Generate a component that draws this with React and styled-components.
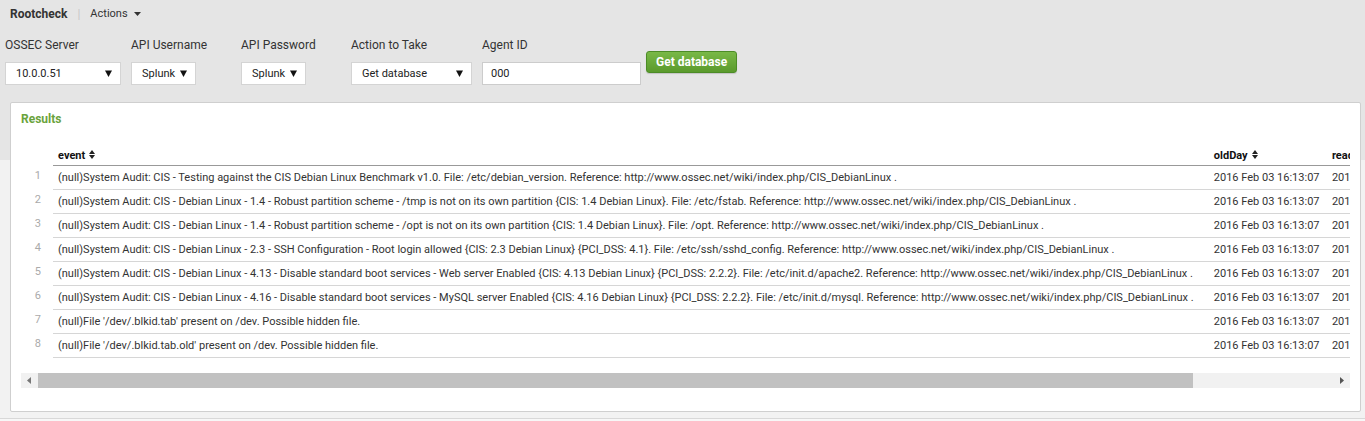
import React from "react";
import styled, { createGlobalStyle } from "styled-components";

const GlobalStyle = createGlobalStyle`
  html, body {
    margin: 0;
    padding: 0;
  }
  body {
    font-family: Roboto, "Liberation Sans", Arial, sans-serif;
    font-size: 12px;
    color: #333;
    background: linear-gradient(#e5e5e5 0, #e5e5e5 160px, #f2f2f2 160px);
    overflow: hidden;
  }
`;

const Page = styled.div`
  width: 1365px;
  display: flex;
  flex-direction: column;
`;

const TopBar = styled.div`
  display: flex;
  align-items: center;
  height: 27px;
  padding: 0 10px;
`;

const AppTitle = styled.span`
  font-weight: 700;
  font-size: 12px;
  color: #333;
`;

const Divider = styled.span`
  color: #c8c8c8;
  margin: 0 10px 0 10px;
`;

const MenuLink = styled.span`
  display: inline-flex;
  align-items: center;
  gap: 6px;
  font-size: 11px;
  color: #333;
`;

const Fieldset = styled.div`
  display: flex;
  align-items: flex-start;
  padding: 10px 5px 0;
  height: 59px;
`;

const Field = styled.div`
  display: flex;
  flex-direction: column;
  min-width: 100px;
  margin-right: 10px;
`;

const Label = styled.label`
  font-size: 12px;
  line-height: 16px;
  color: #333;
  margin-bottom: 9px;
`;

const SelectBox = styled.div`
  box-sizing: border-box;
  width: ${({ $width }) => $width}px;
  height: 23px;
  background: #fff;
  border: 1px solid #d4d4d4;
  display: flex;
  align-items: center;
  justify-content: space-between;
  padding: 0 8px 0 10px;
  font-size: 11px;
  color: #222;
`;

const TextInput = styled.div`
  box-sizing: border-box;
  width: 159px;
  height: 23px;
  background: #fff;
  border: 1px solid #ccc;
  display: flex;
  align-items: center;
  padding: 0 8px;
  font-size: 11px;
  color: #222;
`;

const SubmitButton = styled.button`
  margin: 14px 0 0 -5px;
  height: 22px;
  padding: 0 9px;
  border: 1px solid #4c8c26;
  border-radius: 3px;
  background: linear-gradient(#79b847, #5a9a2c);
  color: #fff;
  font-family: Roboto, "Liberation Sans", Arial, sans-serif;
  font-size: 12px;
  font-weight: 700;
  box-shadow: 0 1px 1px rgba(0, 0, 0, 0.15);
`;

const Panel = styled.div`
  box-sizing: border-box;
  margin: 6px 4px 0 10px;
  height: 310px;
  background: #fff;
  border: 1px solid #cfcfcf;
  border-radius: 2px;
  padding: 8px 10px 0;
  display: flex;
  flex-direction: column;
`;

const PanelTitle = styled.div`
  font-size: 12px;
  font-weight: 700;
  color: #6aa33c;
  line-height: 16px;
  margin-bottom: 18px;
`;

const TableClip = styled.div`
  width: 1329px;
  overflow: hidden;
`;

const Table = styled.table`
  table-layout: fixed;
  border-collapse: collapse;
  width: 1406px;
`;

const Th = styled.th`
  text-align: left;
  font-weight: 700;
  font-size: 11px;
  color: #111;
  height: 20px;
  padding: 0 5px;
  white-space: nowrap;
  overflow: hidden;
  border-bottom: ${({ $blank }) => ($blank ? "none" : "1px solid #999")};
`;

const Td = styled.td`
  font-size: 11px;
  color: #333;
  height: 23px;
  padding: 0 5px;
  white-space: nowrap;
  overflow: hidden;
  border-bottom: 1px solid #d6d6d6;
`;

const RowNum = styled.td`
  text-align: right;
  font-size: 11px;
  color: #aaa;
  padding: 0 12px 0 0;
  height: 23px;
  vertical-align: top;
  line-height: 20px;
`;

const ScrollTrack = styled.div`
  display: flex;
  align-items: center;
  width: 1329px;
  height: 15px;
  margin-top: 15px;
  background: #f1f1f1;
`;

const ScrollArrow = styled.div`
  width: 16px;
  height: 15px;
  display: flex;
  align-items: center;
  justify-content: center;
`;

const ScrollThumb = styled.div`
  height: 15px;
  background: #c1c1c1;
  margin-left: 1px;
`;

const Spacer = styled.div`
  flex: 1;
`;

const Footer = styled.div`
  margin-top: 6px;
  border-top: 1px solid #d8d8d8;
  height: 10px;
  background: #f7f7f7;
`;

const Caret = () => (
  <svg width="7" height="4" viewBox="0 0 7 4">
    <path d="M0 0h7L3.5 4z" fill="#333" />
  </svg>
);

const SelectArrow = () => (
  <svg width="7" height="7" viewBox="0 0 7 7">
    <path d="M0 0.5h7L3.5 7z" fill="#111" />
  </svg>
);

const SortIcon = () => (
  <svg width="6" height="9" viewBox="0 0 6 9" style={{ marginLeft: 4 }}>
    <path d="M0 4L3 0l3 4z M0 5l3 4 3-4z" fill="#222" />
  </svg>
);

const ArrowLeft = () => (
  <svg width="4" height="7" viewBox="0 0 4 7">
    <path d="M4 0v7L0 3.5z" fill="#777" />
  </svg>
);

const ArrowRight = () => (
  <svg width="4" height="7" viewBox="0 0 4 7">
    <path d="M0 0v7l4-3.5z" fill="#555" />
  </svg>
);

const REF = "Reference: http://www.ossec.net/wiki/index.php/CIS_DebianLinux .";

const rows = [
  `(null)System Audit: CIS - Testing against the CIS Debian Linux Benchmark v1.0. File: /etc/debian_version. ${REF}`,
  `(null)System Audit: CIS - Debian Linux - 1.4 - Robust partition scheme - /tmp is not on its own partition {CIS: 1.4 Debian Linux}. File: /etc/fstab. ${REF}`,
  `(null)System Audit: CIS - Debian Linux - 1.4 - Robust partition scheme - /opt is not on its own partition {CIS: 1.4 Debian Linux}. File: /opt. ${REF}`,
  `(null)System Audit: CIS - Debian Linux - 2.3 - SSH Configuration - Root login allowed {CIS: 2.3 Debian Linux} {PCI_DSS: 4.1}. File: /etc/ssh/sshd_config. ${REF}`,
  `(null)System Audit: CIS - Debian Linux - 4.13 - Disable standard boot services - Web server Enabled {CIS: 4.13 Debian Linux} {PCI_DSS: 2.2.2}. File: /etc/init.d/apache2. ${REF}`,
  `(null)System Audit: CIS - Debian Linux - 4.16 - Disable standard boot services - MySQL server Enabled {CIS: 4.16 Debian Linux} {PCI_DSS: 2.2.2}. File: /etc/init.d/mysql. ${REF}`,
  "(null)File '/dev/.blkid.tab' present on /dev. Possible hidden file.",
  "(null)File '/dev/.blkid.tab.old' present on /dev. Possible hidden file.",
];

const selects = [
  { label: "OSSEC Server", value: "10.0.0.51", width: 116 },
  { label: "API Username", value: "Splunk", width: 65 },
  { label: "API Password", value: "Splunk", width: 65 },
  { label: "Action to Take", value: "Get database", width: 121 },
];

const App = () => (
  <Page>
    <GlobalStyle />
    <TopBar>
      <AppTitle>Rootcheck</AppTitle>
      <Divider>|</Divider>
      <MenuLink>
        Actions <Caret />
      </MenuLink>
    </TopBar>
    <Fieldset>
      {selects.map((s) => (
        <Field key={s.label}>
          <Label>{s.label}</Label>
          <SelectBox $width={s.width}>
            <span>{s.value}</span>
            <SelectArrow />
          </SelectBox>
        </Field>
      ))}
      <Field>
        <Label>Agent ID</Label>
        <TextInput>000</TextInput>
      </Field>
      <SubmitButton>Get database</SubmitButton>
    </Fieldset>
    <Panel>
      <PanelTitle>Results</PanelTitle>
      <TableClip>
        <Table>
          <colgroup>
            <col style={{ width: 32 }} />
            <col style={{ width: 1155 }} />
            <col style={{ width: 118 }} />
            <col style={{ width: 100 }} />
          </colgroup>
          <thead>
            <tr>
              <Th $blank />
              <Th>
                event
                <SortIcon />
              </Th>
              <Th>
                oldDay
                <SortIcon />
              </Th>
              <Th>readDay</Th>
            </tr>
          </thead>
          <tbody>
            {rows.map((text, i) => (
              <tr key={i}>
                <RowNum>{i + 1}</RowNum>
                <Td>{text}</Td>
                <Td>2016 Feb 03 16:13:07</Td>
                <Td>2016 Feb 03 16:13:07</Td>
              </tr>
            ))}
          </tbody>
        </Table>
      </TableClip>
      <ScrollTrack>
        <ScrollArrow>
          <ArrowLeft />
        </ScrollArrow>
        <ScrollThumb style={{ width: 1155 }} />
        <Spacer />
        <ScrollArrow>
          <ArrowRight />
        </ScrollArrow>
      </ScrollTrack>
    </Panel>
    <Footer />
  </Page>
);

export default App;
